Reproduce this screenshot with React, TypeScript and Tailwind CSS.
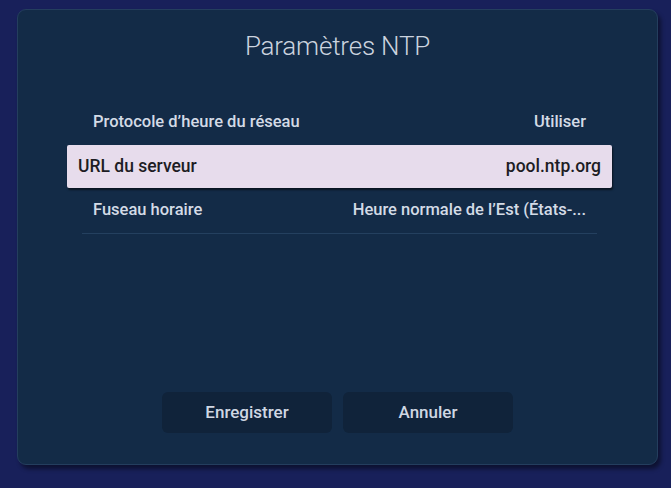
import React from "react";

export default function App() {
  const font = { fontFamily: "Roboto, 'Noto Sans', sans-serif" };
  return (
    <div className="w-[671px] h-[488px] bg-[#18205a] overflow-hidden" style={font}>
      <div className="pt-[9px] pl-[17px]">
        <div className="w-[641px] h-[456px] rounded-[9px] bg-[#132b47] border border-[#243e5e] shadow-[3px_4px_4px_rgba(0,0,0,0.45)] flex flex-col">
          <div className="pt-[19px] text-center text-[26px] leading-[34px] font-light text-[#cbd3df] tracking-[-0.2px]">
            Paramètres NTP
          </div>
          <div className="mt-[36px] ml-[64px] mr-[60px] flex flex-col">
            <div className="h-[46px] px-[11px] flex items-center justify-between text-[16.5px] font-medium text-[#d3dbe6]">
              <span>Protocole d’heure du réseau</span>
              <span>Utiliser</span>
            </div>
            <div className="-mx-[15px] h-[43px] px-[11px] flex items-center justify-between bg-[#e7dcec] text-[17.5px] font-medium text-[#1d1c24] rounded-[2px] shadow-[1px_2px_2px_rgba(0,0,0,0.55)]">
              <span>URL du serveur</span>
              <span>pool.ntp.org</span>
            </div>
            <div className="h-[46px] px-[11px] flex items-center justify-between text-[16.5px] font-medium text-[#d3dbe6] border-b border-[#24405f]">
              <span>Fuseau horaire</span>
              <span>Heure normale de l’Est (États-...</span>
            </div>
          </div>
          <div className="flex-1" />
          <div className="pb-[31px] flex justify-center gap-[11px]">
            <div className="w-[170px] h-[41px] rounded-[6px] bg-[#10233a] flex items-center justify-center text-[17px] font-medium text-[#cfd7e3]">
              Enregistrer
            </div>
            <div className="w-[170px] h-[41px] rounded-[6px] bg-[#10233a] flex items-center justify-center text-[17px] font-medium text-[#cfd7e3]">
              Annuler
            </div>
          </div>
        </div>
      </div>
    </div>
  );
}
